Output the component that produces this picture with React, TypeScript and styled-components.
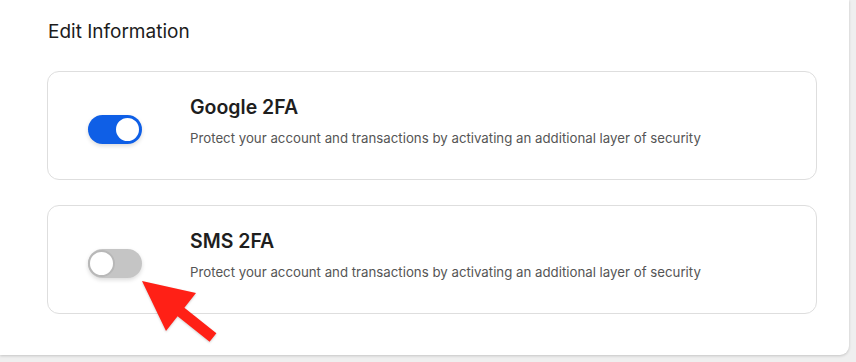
import React, { useState } from "react";
import styled, { createGlobalStyle } from "styled-components";

const GlobalStyle = createGlobalStyle`
  html, body {
    margin: 0;
    padding: 0;
    background: #efefef;
    font-family: Inter, "Noto Sans", sans-serif;
    -webkit-font-smoothing: antialiased;
  }
`;

const Page = styled.div`
  position: relative;
  width: 856px;
  height: 362px;
  overflow: hidden;
  background: #efefef;
`;

const Panel = styled.section`
  box-sizing: border-box;
  width: 849px;
  height: 355px;
  background: #ffffff;
  border-bottom-right-radius: 9px;
  box-shadow: 0 1px 3px rgba(0, 0, 0, 0.18);
  padding: 21px 0 0 47px;
  display: flex;
  flex-direction: column;
`;

const Heading = styled.h2`
  margin: 0 0 28px 1px;
  font-size: 19px;
  line-height: 22px;
  font-weight: 400;
  color: #1c1c1c;
`;

const CardList = styled.div`
  display: flex;
  flex-direction: column;
  gap: 25px;
`;

const Card = styled.div`
  box-sizing: border-box;
  width: 770px;
  height: 109px;
  border: 1px solid #dedede;
  border-radius: 12px;
  display: flex;
  align-items: flex-start;
  padding: 24px 0 0 40px;
  gap: 48px;
`;

const Track = styled.button<{ $on: boolean }>`
  position: relative;
  flex: none;
  width: 54px;
  height: 29px;
  margin-top: 19px;
  border: none;
  padding: 0;
  border-radius: 15px;
  background: ${(p) => (p.$on ? "#0f5fe6" : "#c5c5c5")};
  box-shadow: 0 2px 4px rgba(0, 0, 0, 0.14);
  cursor: pointer;
`;

const Knob = styled.span<{ $on: boolean }>`
  position: absolute;
  top: 1px;
  left: ${(p) => (p.$on ? "26px" : "0px")};
  box-sizing: border-box;
  width: 27px;
  height: 27px;
  border-radius: 50%;
  background: #ffffff;
  border: 2px solid ${(p) => (p.$on ? "#0f5fe6" : "#b8b8b8")};
`;

const TextBlock = styled.div`
  display: flex;
  flex-direction: column;
  gap: 11px;
`;

const Title = styled.h3`
  margin: 0;
  font-size: 19.5px;
  line-height: 22px;
  font-weight: 600;
  color: #1e1e1e;
`;

const Description = styled.p`
  margin: 0;
  font-size: 13.25px;
  line-height: 18px;
  font-weight: 400;
  color: #555555;
`;

const Arrow = styled.svg`
  position: absolute;
  left: 0;
  top: 0;
  pointer-events: none;
  filter: drop-shadow(0 1px 1px rgba(0, 0, 0, 0.2));
`;

type Item = { title: string; on: boolean };

const items: Item[] = [
  { title: "Google 2FA", on: true },
  { title: "SMS 2FA", on: false },
];

const desc =
  "Protect your account and transactions by activating an additional layer of security";

export default function App() {
  const [state, setState] = useState(items.map((i) => i.on));
  return (
    <Page>
      <GlobalStyle />
      <Panel>
        <Heading>Edit Information</Heading>
        <CardList>
          {items.map((it, idx) => (
            <Card key={it.title}>
              <Track
                $on={state[idx]}
                aria-pressed={state[idx]}
                onClick={() =>
                  setState((s) => s.map((v, j) => (j === idx ? !v : v)))
                }
              >
                <Knob $on={state[idx]} />
              </Track>
              <TextBlock>
                <Title>{it.title}</Title>
                <Description>{desc}</Description>
              </TextBlock>
            </Card>
          ))}
        </CardList>
      </Panel>
      <Arrow width="856" height="362" viewBox="0 0 856 362">
        <polygon
          points="142,281 196,293 184.4,307.7 216.4,333.2 209.6,341.8 177.6,316.3 166,331"
          fill="#ff2016"
        />
      </Arrow>
    </Page>
  );
}
